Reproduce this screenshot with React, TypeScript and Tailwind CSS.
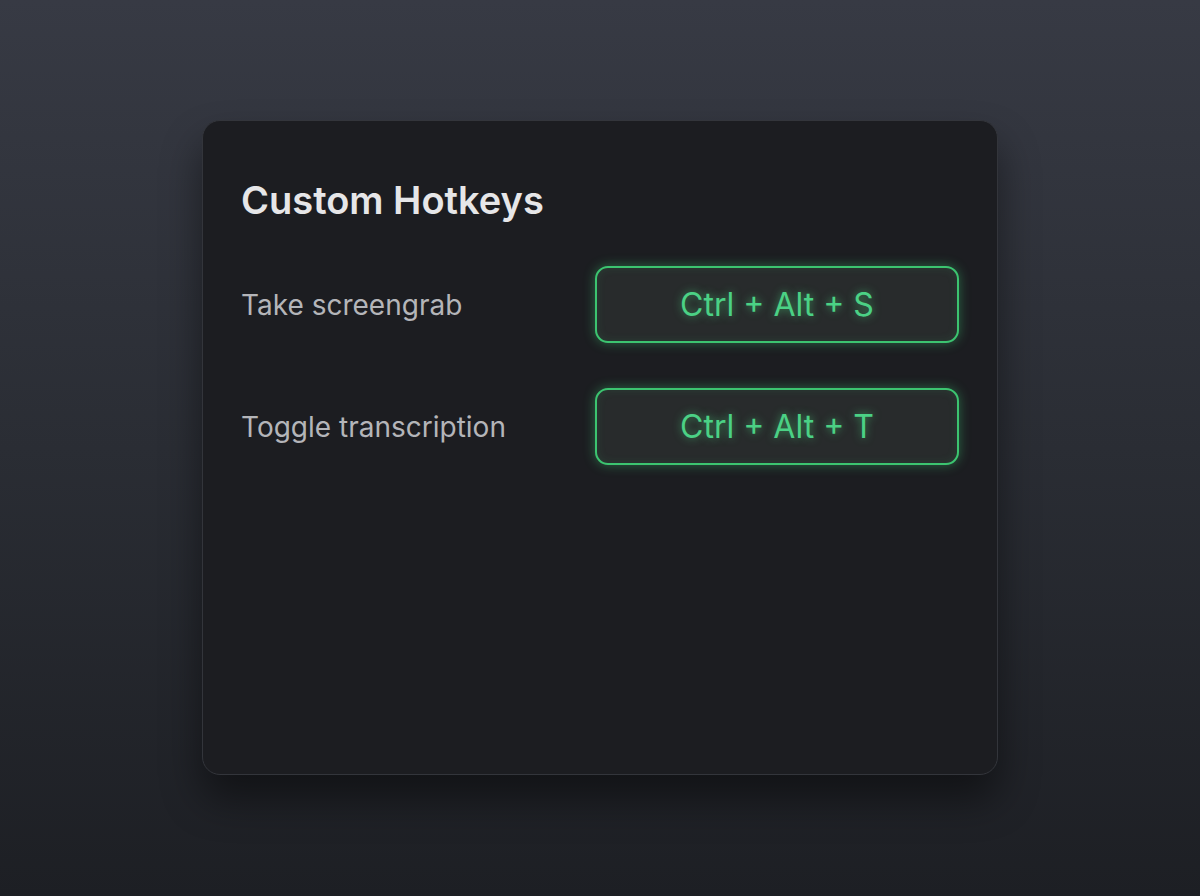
import React from "react";

const hotkeys = [
  { label: "Take screengrab", keys: "Ctrl + Alt + S" },
  { label: "Toggle transcription", keys: "Ctrl + Alt + T" },
];

export default function App() {
  return (
    <div
      className="min-h-[896px] w-full flex items-start justify-center pt-[120px] bg-gradient-to-b from-[#373a44] via-[#2a2d34] to-[#1d1f24]"
      style={{ fontFamily: "Inter, 'Noto Sans', sans-serif" }}>
      <div className="w-[796px] h-[655px] rounded-[18px] bg-[#1c1d21] border border-[#33353b] shadow-[0_24px_40px_rgba(0,0,0,0.45)] px-[38px] pt-[57px]">
        <h1 className="text-[38px] leading-[44px] font-semibold text-[#e6e6e8]">
          Custom Hotkeys
        </h1>

        <div className="mt-[44px] flex flex-col gap-[45px]">
          {hotkeys.map((h) => (
            <div key={h.label} className="flex items-center justify-between">
              <span className="text-[28px] text-[#b4b5b9]">{h.label}</span>
              <button className="w-[364px] h-[77px] rounded-[13px] border-2 border-[#3cc470] bg-[#282b2c] shadow-[0_0_12px_rgba(60,196,112,0.45),inset_0_0_10px_rgba(60,196,112,0.12)] flex items-center justify-center">
                <span className="text-[32px] text-[#4bd185] [text-shadow:0_0_8px_rgba(74,222,128,0.6)]">
                  {h.keys}
                </span>
              </button>
            </div>
          ))}
        </div>
      </div>
    </div>
  );
}
